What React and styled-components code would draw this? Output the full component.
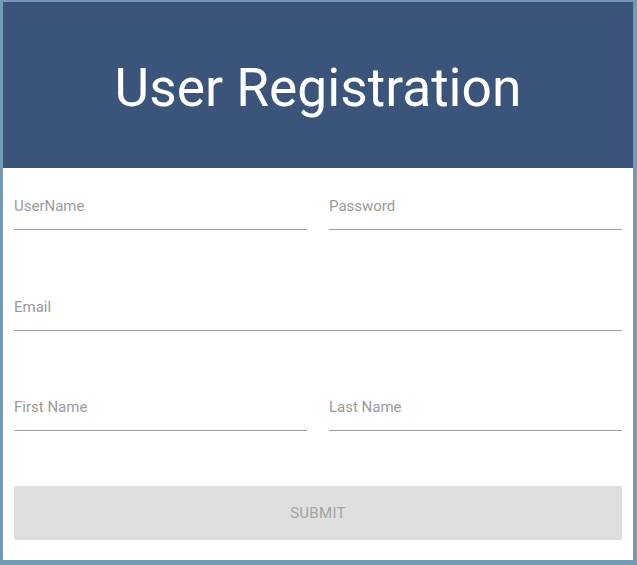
import React from 'react';
import styled, { createGlobalStyle } from 'styled-components';

const GlobalStyle = createGlobalStyle`
  html, body {
    margin: 0;
    padding: 0;
    background: #7499b4;
    font-family: Roboto, "Liberation Sans", sans-serif;
  }
`;

const Page = styled.div`
  width: 637px;
  height: 565px;
  padding: 2px 4px 5px 3px;
  box-sizing: border-box;
`;

const Card = styled.div`
  background: #fff;
  height: 100%;
  display: flex;
  flex-direction: column;
`;

const Header = styled.header`
  height: 166px;
  background: #3a5579;
  display: flex;
  align-items: center;
  justify-content: center;
  padding-top: 5px;
  box-sizing: border-box;
`;

const Title = styled.h1`
  margin: 0;
  color: #fff;
  font-size: 53.3px;
  font-weight: 400;
`;

const Form = styled.form`
  padding: 0 11px;
  display: grid;
  grid-template-columns: 1fr 1fr;
  column-gap: 22px;
  row-gap: 38.5px;
`;

const Field = styled.label`
  display: block;
  height: 62px;
  border-bottom: 1px solid #9e9e9e;
  box-sizing: border-box;
  position: relative;
  grid-column: ${p => (p.$wide ? '1 / span 2' : 'auto')};
`;

const Label = styled.span`
  position: absolute;
  left: 0;
  top: 29px;
  font-size: 15px;
  color: #9a9a9a;
`;

const Submit = styled.button`
  grid-column: 1 / span 2;
  margin-top: 16px;
  height: 54px;
  border: none;
  border-radius: 2px;
  background: #dfdfdf;
  color: #a3a3a3;
  font-family: Roboto, "Liberation Sans", sans-serif;
  font-size: 15px;
  letter-spacing: 0.3px;
  text-transform: uppercase;
`;

export default function App() {
  return (
    <>
      <GlobalStyle />
      <Page>
        <Card>
          <Header>
            <Title>User Registration</Title>
          </Header>
          <Form onSubmit={e => e.preventDefault()}>
            <Field><Label>UserName</Label></Field>
            <Field><Label>Password</Label></Field>
            <Field $wide><Label>Email</Label></Field>
            <Field><Label>First Name</Label></Field>
            <Field><Label>Last Name</Label></Field>
            <Submit type="submit" disabled>Submit</Submit>
          </Form>
        </Card>
      </Page>
    </>
  );
}
